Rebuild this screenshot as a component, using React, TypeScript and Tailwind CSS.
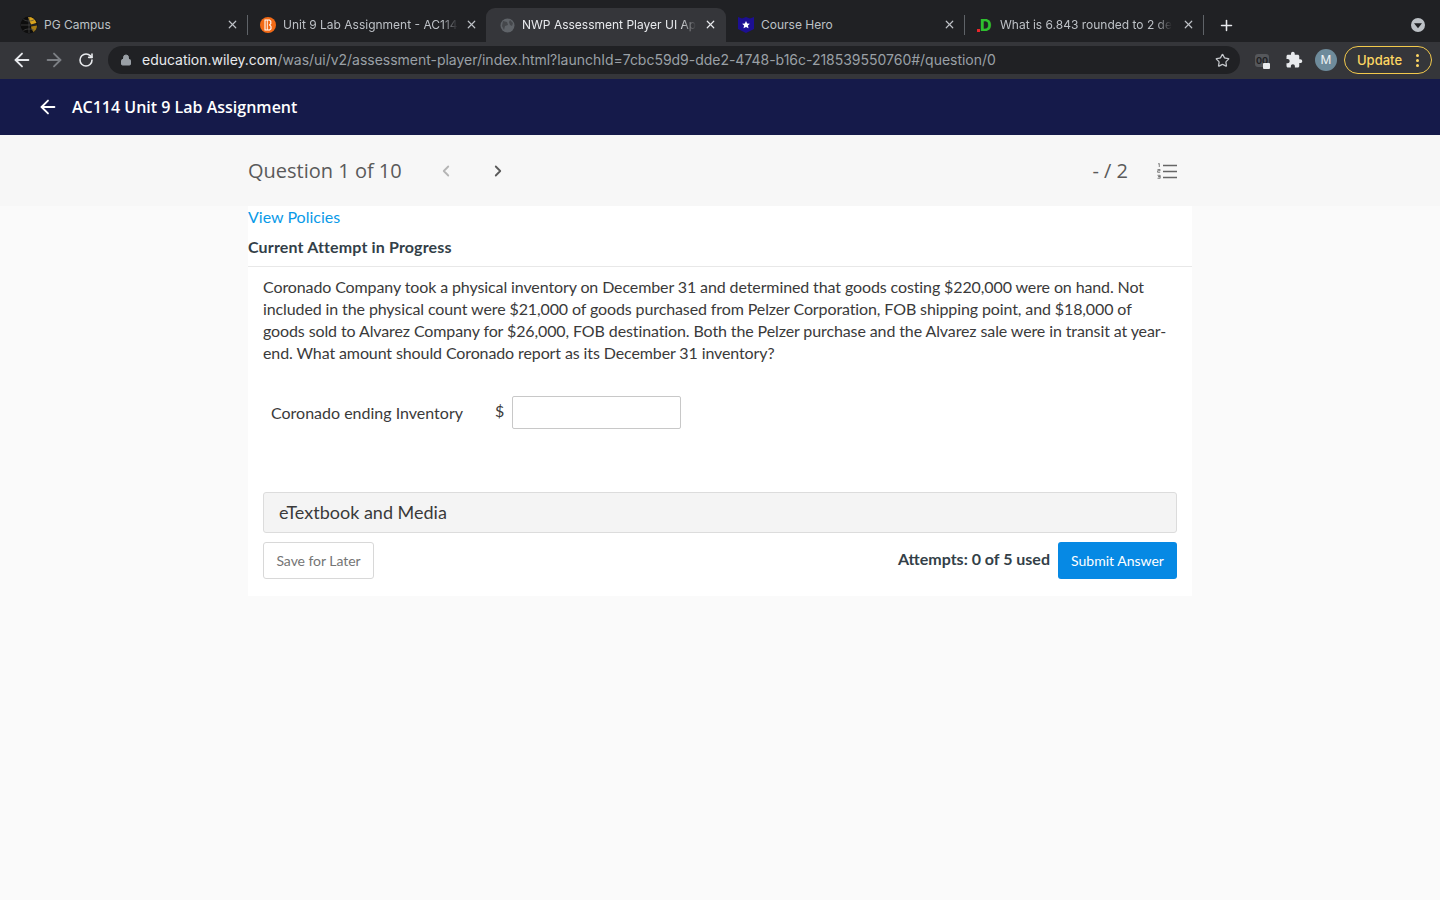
import React from "react";
import { ArrowLeft, ArrowRight, RotateCw, Lock, Star, Plus, X, ChevronLeft, ChevronRight } from "lucide-react";

const inter = "font-['Inter','Liberation_Sans',sans-serif]";

function Tab({ icon, title, width, active, sep, fade }: { icon: React.ReactNode; title: string; width: string; active?: boolean; sep?: boolean; fade?: boolean }) {
  return (
    <div className={`relative flex h-[34px] items-center ${width} ${active ? "mr-[-1px] rounded-t-[9px] bg-[#35363a]" : ""}`}>
      <div className="ml-[12px] flex w-[18px] shrink-0 justify-center">{icon}</div>
      <div className={`ml-[6px] whitespace-nowrap text-[12px] leading-4 ${fade ? "[mask-image:linear-gradient(to_left,transparent_0px,black_16px)]" : ""} ${active ? "text-[#e8eaed]" : "text-[#bdc1c6]"}`}>{title}</div>
      <X className={`absolute top-[10px] h-[13px] w-[13px] ${active ? "right-[9px] text-[#e8eaed]" : "right-[8px] text-[#bdc1c6]"}`} strokeWidth={2.2} />
      {sep && <div className="absolute right-[-1px] top-[7px] h-[20px] w-px bg-[#5f6368]" />}
    </div>
  );
}

export default function App() {
  return (
    <div className="flex min-h-[900px] flex-col bg-[#fafafa]">
      {/* tab strip */}
      <div className={`flex h-[42px] items-end bg-[#202124] pl-[8px] ${inter}`}>
        <Tab width="w-[239px]" sep title="PG Campus" icon={
          <svg width="18" height="18" viewBox="0 0 18 18"><circle cx="9" cy="9" r="8.5" fill="#0d0d0d" /><path d="M8 1a8 8 0 0 1 8.5 6L11 8.5 9.5 5z" fill="#d9a41e" /><path d="M11 10.5l6-1a8 8 0 0 1-3.5 6.5L11.5 13z" fill="#a67c14" /><path d="M1 9h16M9 1v16M3.5 3.5c3 2 8 2 11 0M3.5 14.5c3-2 8-2 11 0" stroke="#4a4a4a" strokeWidth=".7" fill="none" /></svg>
        } />
        <Tab width="w-[239px]" fade title="Unit 9 Lab Assignment - AC114" icon={
          <svg width="16" height="16" viewBox="0 0 16 16"><circle cx="8" cy="8" r="8" fill="#f26a16" /><path d="M5 3h4.5l1.3 1.2v2.3L9.6 8l1.4 1.4v2.3L9.7 13H5z" fill="none" stroke="#fff" strokeWidth="1.1" /><path d="M7.3 3v10" stroke="#fff" strokeWidth=".9" /></svg>
        } />
        <Tab active fade width="w-[240px]" title="NWP Assessment Player UI Ap" icon={
          <svg width="15" height="15" viewBox="0 0 15 15"><circle cx="7.5" cy="7.5" r="7" fill="#5f6368" /><path d="M3 3l4 1 1 3-3 1-1 4-2-4zM10 2l3 3-1 3-2-1-1-3z" fill="#45474b" /></svg>
        } />
        <Tab width="w-[239px]" sep title="Course Hero" icon={
          <svg width="16" height="16" viewBox="0 0 16 16"><path d="M0 0l4 1.5L8 0l4 1.5L16 0v12l-8 4-8-4z" fill="#1c0f92" /><path d="M8 4l1.2 2.5 2.7.3-2 1.8.6 2.7L8 10l-2.5 1.3.6-2.7-2-1.8 2.7-.3z" fill="#fff" /></svg>
        } />
        <Tab width="w-[239px]" sep fade title="What is 6.843 rounded to 2 de" icon={
          <span className="relative flex h-[16px] w-[16px] items-center justify-start pl-[3px] text-[16px] font-extrabold leading-none text-[#2fbf2f]"><span className="absolute bottom-[1px] left-0 h-[3px] w-[3px] bg-[#e8262a]" />D</span>
        } />
        <div className="ml-[15px] flex h-[34px] items-center">
          <Plus className="h-[17px] w-[17px] text-[#e8eaed]" strokeWidth={2.2} />
        </div>
        <div className="ml-auto mr-[15px] flex h-[34px] items-center">
          <svg width="14" height="14" viewBox="0 0 14 14"><circle cx="7" cy="7" r="7" fill="#bdc1c6" /><path d="M3 5.2h8L7 10.2z" fill="#202124" /></svg>
        </div>
      </div>

      {/* toolbar */}
      <div className={`flex h-[37px] items-center bg-[#35363a] pb-[1px] ${inter}`}>
        <ArrowLeft className="ml-[11px] h-[22px] w-[22px] text-[#e8eaed]" strokeWidth={2} />
        <ArrowRight className="ml-[10px] h-[22px] w-[22px] text-[#7c7f84]" strokeWidth={2} />
        <RotateCw className="ml-[13px] h-[16px] w-[16px] text-[#e8eaed]" strokeWidth={2.4} />
        <div className="ml-[14px] flex h-[28px] w-[1132px] items-center rounded-full bg-[#202124]">
          <Lock className="ml-[12px] h-[12px] w-[12px] fill-[#9aa0a6] text-[#9aa0a6]" strokeWidth={2} />
          <div className="ml-[10px] whitespace-nowrap text-[14px] leading-5 tracking-[-0.02px]">
            <span className="text-[#e8eaed]">education.wiley.com</span>
            <span className="text-[#9aa0a6]">/was/ui/v2/assessment-player/index.html?launchId=7cbc59d9-dde2-4748-b16c-218539550760#/question/0</span>
          </div>
          <Star className="ml-auto mr-[10px] h-[15px] w-[15px] text-[#c4c7cb]" strokeWidth={2} />
        </div>
        <div className="relative ml-[15px] flex h-[13px] w-[14px] items-center justify-center rounded-[3px] bg-[#55575b] text-[9px] font-bold leading-none text-[#202124]">
          00
          <span className="absolute bottom-[-2px] right-[-1px] h-[6px] w-[7px] rounded-[1px] bg-[#e8eaed]" />
        </div>
        <svg className="ml-[16px]" width="18" height="18" viewBox="0 0 24 24" fill="#e8eaed"><path d="M20.5 11H19V7c0-1.1-.9-2-2-2h-4V3.5C13 2.12 11.88 1 10.5 1S8 2.12 8 3.5V5H4c-1.1 0-1.99.9-1.99 2v3.8H3.5c1.49 0 2.7 1.21 2.7 2.7s-1.21 2.7-2.7 2.7H2V20c0 1.1.9 2 2 2h3.8v-1.5c0-1.49 1.21-2.7 2.7-2.7 1.49 0 2.7 1.21 2.7 2.7V22H17c1.1 0 2-.9 2-2v-4h1.5c1.38 0 2.5-1.12 2.5-2.5S21.88 11 20.5 11z" /></svg>
        <div className="ml-[12px] flex h-[22px] w-[22px] items-center justify-center rounded-full bg-[#6e8b9b] text-[12px] text-[#eef2f4]">M</div>
        <div className="ml-[7px] flex h-[28px] w-[88px] items-center rounded-full border border-[#f2c94c] pl-[12px] text-[13px] font-medium text-[#fdd663]">
          <span className="pt-[1px]">Update</span>
          <span className="ml-[14px] flex flex-col gap-[2px]">
            <span className="h-[3px] w-[3px] rounded-full bg-[#fdd663]" />
            <span className="h-[3px] w-[3px] rounded-full bg-[#fdd663]" />
            <span className="h-[3px] w-[3px] rounded-full bg-[#fdd663]" />
          </span>
        </div>
      </div>

      {/* app header */}
      <div className="flex h-[56px] items-center bg-[#151a4a] pl-[37px] font-['Open_Sans',sans-serif] text-white">
        <ArrowLeft className="h-[22px] w-[22px]" strokeWidth={2} />
        <div className="ml-[13px] text-[16px] font-semibold leading-6">AC114 Unit 9 Lab Assignment</div>
      </div>

      {/* question bar */}
      <div className="flex h-[71px] justify-center bg-[#f7f7f7] font-['Open_Sans',sans-serif]">
        <div className="flex w-[944px] items-center pr-[15px]">
          <div className="text-[20px] leading-7 text-[#5a5a5a]">Question 1 of 10</div>
          <ChevronLeft className="ml-[35px] h-[18px] w-[18px] text-[#b5b5b5]" strokeWidth={2.4} />
          <ChevronRight className="ml-[34px] h-[18px] w-[18px] text-[#5a5a5a]" strokeWidth={2.4} />
          <div className="ml-auto text-[20px] leading-7 text-[#5a5a5a]">- / 2</div>
          <svg className="ml-[29px]" width="20" height="16" viewBox="0 0 20 16">
            <path d="M6 2.5h14M6 8.5h14M6 14.5h14" stroke="#666" strokeWidth="1.6" />
            <path d="M1 1l1.3-.5V4M.5 6.5h2.6v1.2H.6v1.6h2.6M.5 12.3h2.7v1.4H1.2h2v1.6H.5" fill="none" stroke="#666" strokeWidth=".8" />
          </svg>
        </div>
      </div>

      {/* card */}
      <div className="mx-auto w-[944px] bg-white pb-[17px] font-['Lato',sans-serif] text-[#3a3a3a]">
        <div className="pt-[1px] text-[16px] leading-[20px] text-[#0a9ae8]">View Policies</div>
        <div className="mt-[10px] border-b border-[#e8e8e8] pb-[9px] text-[16px] font-bold leading-[20px] tracking-[0.15px] text-[#333f48]">Current Attempt in Progress</div>
        <div className="px-[15px]">
          <p className="mt-[9px] pr-[2px] text-[16px] leading-[22px] tracking-[-0.11px]">
            Coronado Company took a physical inventory on December 31 and determined that goods costing $220,000 were on hand. Not included in the physical count were $21,000 of goods purchased from Pelzer Corporation, FOB shipping point, and $18,000 of goods sold to Alvarez Company for $26,000, FOB destination. Both the Pelzer purchase and the Alvarez sale were in transit at year-end. What amount should Coronado report as its December 31 inventory?
          </p>
          <div className="mt-[32px] flex items-center pl-[8px]">
            <div className="w-[224px] text-[16px] leading-5">Coronado ending Inventory</div>
            <div className="mb-[4px] w-[17px] text-[16px] leading-5">$</div>
            <div className="h-[33px] w-[169px] rounded-[2px] border border-[#c8c8c8] bg-white" />
          </div>
          <div className="mt-[63px] flex h-[41px] items-center rounded-[3px] border border-[#dcdcdc] bg-[#f4f4f4] pb-[2px] pl-[15px] text-[18px] leading-6 text-[#3a3a3a]">eTextbook and Media</div>
          <div className="mt-[9px] flex items-center">
            <div className="flex h-[37px] w-[111px] items-center justify-center rounded-[3px] border border-[#d8d8d8] bg-white text-[14px] tracking-[-0.05px] text-[#757575]">Save for Later</div>
            <div className="ml-auto mb-[3px] text-[16px] font-bold text-[#333f48]">Attempts: 0 of 5 used</div>
            <div className="ml-[8px] flex h-[37px] w-[119px] items-center justify-center rounded-[3px] bg-[#0689e4] text-[14px] text-white">Submit Answer</div>
          </div>
        </div>
      </div>
    </div>
  );
}
